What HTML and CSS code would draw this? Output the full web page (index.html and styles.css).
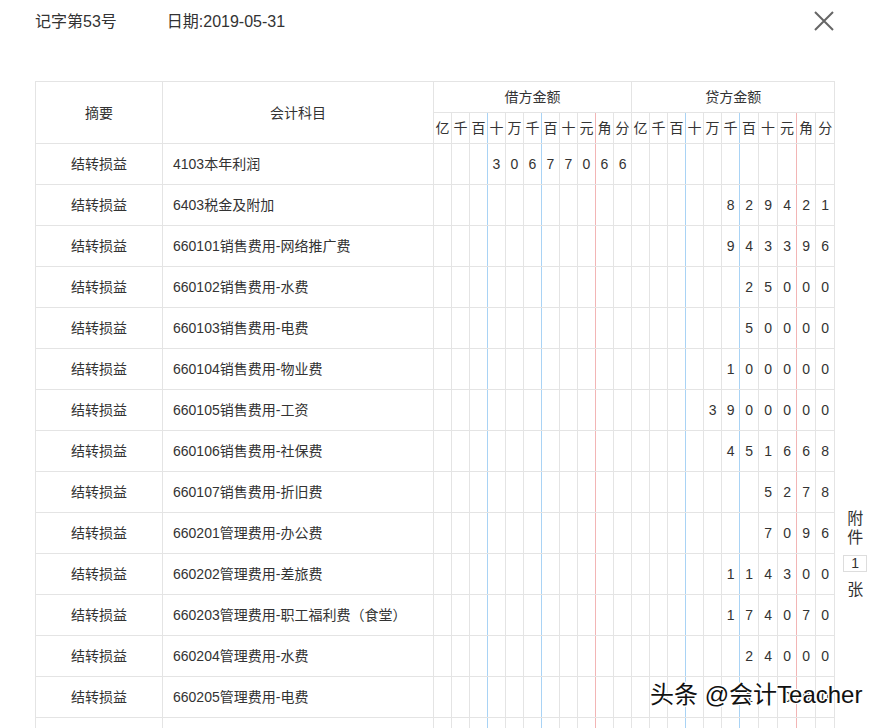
FILE: index.html
```html
<!DOCTYPE html>
<html lang="zh">
<head>
<meta charset="utf-8">
<link rel="stylesheet" href="styles.css">
</head>
<body>
<div class="page">
  <div class="top">
    <div class="titles">
      <span class="no">记字第53号</span>
      <span class="date">日期:2019-05-31</span>
    </div>
    <svg class="close" width="20" height="20" viewBox="0 0 20 20"><path d="M1 1L19 19M19 1L1 19" stroke="#666" stroke-width="2" fill="none"/></svg>
  </div>
  <div class="main">
    <table class="voucher">
      <colgroup>
        <col style="width:127px"><col style="width:271px">
        <col style="width:18px"><col style="width:18px"><col style="width:18px"><col style="width:18px"><col style="width:18px"><col style="width:18px"><col style="width:18px"><col style="width:18px"><col style="width:18px"><col style="width:18px"><col style="width:18px">
        <col style="width:18px"><col style="width:18px"><col style="width:18px"><col style="width:18px"><col style="width:18px"><col style="width:18px"><col style="width:19px"><col style="width:19px"><col style="width:19px"><col style="width:19px"><col style="width:19px">
      </colgroup>
      <thead>
        <tr class="h1">
          <th rowspan="2">摘要</th>
          <th rowspan="2">会计科目</th>
          <th colspan="11">借方金额</th>
          <th colspan="11">贷方金额</th>
        </tr>
        <tr class="h2">
          <th>亿</th><th>千</th><th>百</th><th>十</th><th>万</th><th>千</th><th>百</th><th>十</th><th>元</th><th>角</th><th>分</th>
          <th>亿</th><th>千</th><th>百</th><th>十</th><th>万</th><th>千</th><th>百</th><th>十</th><th>元</th><th>角</th><th>分</th>
        </tr>
      </thead>
      <tbody>
        <tr class="row"><td class="sum">结转损益</td><td class="acc">4103本年利润</td>
          <td></td><td></td><td></td><td>3</td><td>0</td><td>6</td><td>7</td><td>7</td><td>0</td><td>6</td><td>6</td>
          <td></td><td></td><td></td><td></td><td></td><td></td><td></td><td></td><td></td><td></td><td></td></tr>
        <tr class="row"><td class="sum">结转损益</td><td class="acc">6403税金及附加</td>
          <td></td><td></td><td></td><td></td><td></td><td></td><td></td><td></td><td></td><td></td><td></td>
          <td></td><td></td><td></td><td></td><td></td><td>8</td><td>2</td><td>9</td><td>4</td><td>2</td><td>1</td></tr>
        <tr class="row"><td class="sum">结转损益</td><td class="acc">660101销售费用-网络推广费</td>
          <td></td><td></td><td></td><td></td><td></td><td></td><td></td><td></td><td></td><td></td><td></td>
          <td></td><td></td><td></td><td></td><td></td><td>9</td><td>4</td><td>3</td><td>3</td><td>9</td><td>6</td></tr>
        <tr class="row"><td class="sum">结转损益</td><td class="acc">660102销售费用-水费</td>
          <td></td><td></td><td></td><td></td><td></td><td></td><td></td><td></td><td></td><td></td><td></td>
          <td></td><td></td><td></td><td></td><td></td><td></td><td>2</td><td>5</td><td>0</td><td>0</td><td>0</td></tr>
        <tr class="row"><td class="sum">结转损益</td><td class="acc">660103销售费用-电费</td>
          <td></td><td></td><td></td><td></td><td></td><td></td><td></td><td></td><td></td><td></td><td></td>
          <td></td><td></td><td></td><td></td><td></td><td></td><td>5</td><td>0</td><td>0</td><td>0</td><td>0</td></tr>
        <tr class="row"><td class="sum">结转损益</td><td class="acc">660104销售费用-物业费</td>
          <td></td><td></td><td></td><td></td><td></td><td></td><td></td><td></td><td></td><td></td><td></td>
          <td></td><td></td><td></td><td></td><td></td><td>1</td><td>0</td><td>0</td><td>0</td><td>0</td><td>0</td></tr>
        <tr class="row"><td class="sum">结转损益</td><td class="acc">660105销售费用-工资</td>
          <td></td><td></td><td></td><td></td><td></td><td></td><td></td><td></td><td></td><td></td><td></td>
          <td></td><td></td><td></td><td></td><td>3</td><td>9</td><td>0</td><td>0</td><td>0</td><td>0</td><td>0</td></tr>
        <tr class="row"><td class="sum">结转损益</td><td class="acc">660106销售费用-社保费</td>
          <td></td><td></td><td></td><td></td><td></td><td></td><td></td><td></td><td></td><td></td><td></td>
          <td></td><td></td><td></td><td></td><td></td><td>4</td><td>5</td><td>1</td><td>6</td><td>6</td><td>8</td></tr>
        <tr class="row"><td class="sum">结转损益</td><td class="acc">660107销售费用-折旧费</td>
          <td></td><td></td><td></td><td></td><td></td><td></td><td></td><td></td><td></td><td></td><td></td>
          <td></td><td></td><td></td><td></td><td></td><td></td><td></td><td>5</td><td>2</td><td>7</td><td>8</td></tr>
        <tr class="row"><td class="sum">结转损益</td><td class="acc">660201管理费用-办公费</td>
          <td></td><td></td><td></td><td></td><td></td><td></td><td></td><td></td><td></td><td></td><td></td>
          <td></td><td></td><td></td><td></td><td></td><td></td><td></td><td>7</td><td>0</td><td>9</td><td>6</td></tr>
        <tr class="row"><td class="sum">结转损益</td><td class="acc">660202管理费用-差旅费</td>
          <td></td><td></td><td></td><td></td><td></td><td></td><td></td><td></td><td></td><td></td><td></td>
          <td></td><td></td><td></td><td></td><td></td><td>1</td><td>1</td><td>4</td><td>3</td><td>0</td><td>0</td></tr>
        <tr class="row"><td class="sum">结转损益</td><td class="acc">660203管理费用-职工福利费（食堂）</td>
          <td></td><td></td><td></td><td></td><td></td><td></td><td></td><td></td><td></td><td></td><td></td>
          <td></td><td></td><td></td><td></td><td></td><td>1</td><td>7</td><td>4</td><td>0</td><td>7</td><td>0</td></tr>
        <tr class="row"><td class="sum">结转损益</td><td class="acc">660204管理费用-水费</td>
          <td></td><td></td><td></td><td></td><td></td><td></td><td></td><td></td><td></td><td></td><td></td>
          <td></td><td></td><td></td><td></td><td></td><td></td><td>2</td><td>4</td><td>0</td><td>0</td><td>0</td></tr>
        <tr class="row"><td class="sum">结转损益</td><td class="acc">660205管理费用-电费</td>
          <td></td><td></td><td></td><td></td><td></td><td></td><td></td><td></td><td></td><td></td><td></td>
          <td></td><td></td><td></td><td></td><td></td><td></td><td>1</td><td>7</td><td>0</td><td>0</td><td>0</td></tr>
        <tr class="row"><td class="sum"></td><td class="acc"></td>
          <td></td><td></td><td></td><td></td><td></td><td></td><td></td><td></td><td></td><td></td><td></td>
          <td></td><td></td><td></td><td></td><td></td><td></td><td></td><td></td><td></td><td></td><td></td></tr>
      </tbody>
    </table>
    <div class="attach">
      <div class="att-label">附<br>件</div>
      <div class="att-count">1</div>
      <div class="att-unit">张</div>
    </div>
  </div>
  <div class="watermark">头条 @会计Teacher</div>
</div>
</body>
</html>
```

FILE: styles.css
```css
html, body {
  margin: 0;
  padding: 0;
  background: #fff;
  overflow: hidden;
}
body {
  font-family: "Liberation Sans", Arial, "Noto Sans CJK SC", sans-serif;
  color: #333;
}
.page {
  position: relative;
  width: 881px;
  height: 728px;
  overflow: hidden;
}
.top {
  display: flex;
  justify-content: space-between;
  align-items: flex-start;
  width: 800px;
  margin-left: 35px;
  padding-top: 12px;
  height: 69px;
  box-sizing: content-box;
}
.titles {
  display: flex;
  gap: 50px;
  font-size: 16px;
  line-height: 20px;
}
.close {
  margin-top: -1px;
  margin-right: 1px;
}
.main {
  display: flex;
  align-items: flex-start;
  margin-left: 35px;
}
.voucher {
  border-collapse: collapse;
  table-layout: fixed;
  width: 800px;
  flex: none;
}
.voucher th, .voucher td {
  border: 1px solid #e4e4e4;
  padding: 0;
  text-align: center;
  font-weight: normal;
  font-size: 14px;
  color: #333;
  overflow: hidden;
  white-space: nowrap;
}
.h1 th, .h2 th {
  height: 30px;
  line-height: 20px;
}
.h2 th {
  font-size: 14px;
}
.row td {
  height: 40px;
  line-height: 20px;
}
.row td.acc {
  text-align: left;
  padding-left: 10px;
}
.h2 th:nth-child(3), .h2 th:nth-child(6),
.h2 th:nth-child(14), .h2 th:nth-child(17),
.row td:nth-child(5), .row td:nth-child(8),
.row td:nth-child(16), .row td:nth-child(19) {
  border-right-color: #a9d3f5;
}
.h2 th:nth-child(9), .h2 th:nth-child(20),
.row td:nth-child(11), .row td:nth-child(22) {
  border-right-color: #f2b5b5;
}
.attach {
  width: 40px;
  display: flex;
  flex-direction: column;
  align-items: center;
  padding-top: 428px;
  font-size: 16px;
  color: #333;
}
.att-label {
  line-height: 19px;
  text-align: center;
}
.att-count {
  margin-top: 8px;
  width: 22px;
  height: 15px;
  border: 1px solid #ddd;
  font-size: 14px;
  line-height: 15px;
  text-align: center;
}
.att-unit {
  margin-top: 8px;
  line-height: 20px;
}
.watermark {
  position: absolute;
  left: 650px;
  top: 681px;
  font-family: "Liberation Sans", Arial, "Noto Sans CJK SC", sans-serif;
  font-size: 24px;
  line-height: 28px;
  color: #111;
  white-space: nowrap;
  text-shadow: 1px 0 0 #fff, -1px 0 0 #fff, 0 1px 0 #fff, 0 -1px 0 #fff,
    1px 1px 0 #fff, -1px -1px 0 #fff, 1px -1px 0 #fff, -1px 1px 0 #fff;
}
```
